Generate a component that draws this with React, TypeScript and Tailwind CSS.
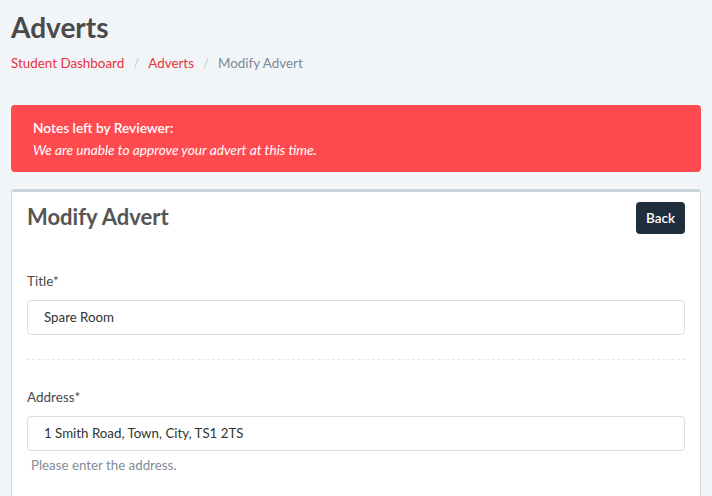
import React from "react";

export default function App() {
  return (
    <div
      className="min-h-[496px] w-full bg-[#f2f5f8] px-[11px] pt-[10px] text-[#4a4a4a]"
      style={{ fontFamily: "Lato, 'Liberation Sans', sans-serif" }}
    >
      <h1 className="text-[28px] font-bold leading-[34px] text-[#4a4a4a]">Adverts</h1>
      <nav className="mt-[9px] flex items-center text-[13.4px] leading-[20px]">
        <span className="text-[#e8313b]">Student Dashboard</span>
        <span className="mx-[9px] text-[#c4ccd2]">/</span>
        <span className="text-[#e8313b]">Adverts</span>
        <span className="mx-[9px] text-[#c4ccd2]">/</span>
        <span className="text-[#7b8a95]">Modify Advert</span>
      </nav>
      <div className="mt-[32px] rounded-[4px] bg-[#ff4a4f] px-[22px] pb-[11px] pt-[12px] text-[13.7px] leading-[22px] text-white">
        <p className="font-semibold">Notes left by Reviewer:</p>
        <p className="italic">We are unable to approve your advert at this time.</p>
      </div>
      <div className="mt-[17px] rounded-t-[4px] border border-t-[3px] border-[#d3dde3] border-t-[#c9d5dd] bg-white px-[15px] pt-[10px]">
        <div className="flex items-start justify-between">
          <h2 className="pt-[1px] text-[22px] font-bold leading-[28px] text-[#555]">Modify Advert</h2>
          <button className="h-[32px] rounded-[4px] bg-[#1f2d3d] px-[10px] text-[13.5px] font-semibold text-white">
            Back
          </button>
        </div>
        <div className="pt-[37px]">
          <label className="block text-[13.5px] leading-[20px] text-[#4a4a4a]">Title*</label>
          <div className="mt-[9px] flex h-[35px] items-center rounded-[4px] border border-[#d6e2e2] px-[16px] text-[13.3px] text-[#333]">
            Spare Room
          </div>
        </div>
        <div className="mt-[24px] border-t border-dashed border-[#e2e8ec]" />
        <div className="pt-[27px]">
          <label className="block text-[13.5px] leading-[20px] text-[#4a4a4a]">Address*</label>
          <div className="mt-[9px] flex h-[35px] items-center rounded-[4px] border border-[#d6e2e2] px-[16px] text-[13.3px] text-[#333]">
            1 Smith Road, Town, City, TS1 2TS
          </div>
          <p className="mt-[5px] pl-[4px] text-[13.3px] leading-[18px] text-[#7f8d96]">Please enter the address.</p>
        </div>
        <div className="mt-[22px] border-t border-dashed border-[#e2e8ec]" />
        <div className="h-[40px]" />
      </div>
    </div>
  );
}
